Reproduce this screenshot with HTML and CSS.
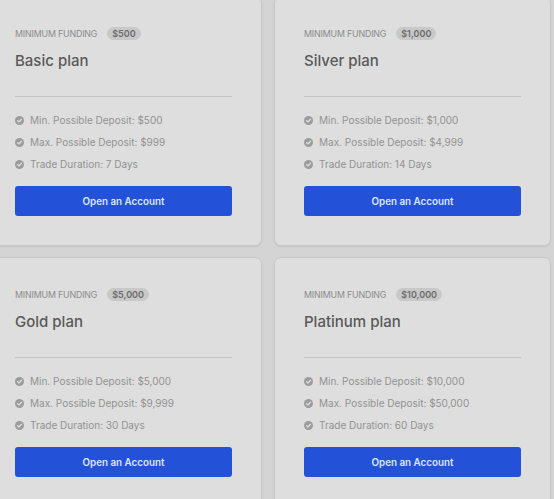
FILE: index.html
```html
<!DOCTYPE html>
<html lang="en">
<head>
<meta charset="utf-8">
<title>Plans</title>
<link rel="stylesheet" href="styles.css">
</head>
<body>
<div class="grid">
  <div class="card">
    <div class="head"><span class="label">MINIMUM FUNDING</span><span class="badge">$500</span></div>
    <h2 class="title">Basic plan</h2>
    <hr class="divider">
    <ul class="list">
      <li><svg class="check" viewBox="0 0 10 10"><circle cx="5" cy="5" r="5"/><path d="M2.8 5.1l1.5 1.5 2.9-3"/></svg>Min. Possible Deposit: $500</li>
      <li><svg class="check" viewBox="0 0 10 10"><circle cx="5" cy="5" r="5"/><path d="M2.8 5.1l1.5 1.5 2.9-3"/></svg>Max. Possible Deposit: $999</li>
      <li><svg class="check" viewBox="0 0 10 10"><circle cx="5" cy="5" r="5"/><path d="M2.8 5.1l1.5 1.5 2.9-3"/></svg>Trade Duration: 7 Days</li>
    </ul>
    <button class="btn">Open an Account</button>
  </div>
  <div class="card">
    <div class="head"><span class="label">MINIMUM FUNDING</span><span class="badge">$1,000</span></div>
    <h2 class="title">Silver plan</h2>
    <hr class="divider">
    <ul class="list">
      <li><svg class="check" viewBox="0 0 10 10"><circle cx="5" cy="5" r="5"/><path d="M2.8 5.1l1.5 1.5 2.9-3"/></svg>Min. Possible Deposit: $1,000</li>
      <li><svg class="check" viewBox="0 0 10 10"><circle cx="5" cy="5" r="5"/><path d="M2.8 5.1l1.5 1.5 2.9-3"/></svg>Max. Possible Deposit: $4,999</li>
      <li><svg class="check" viewBox="0 0 10 10"><circle cx="5" cy="5" r="5"/><path d="M2.8 5.1l1.5 1.5 2.9-3"/></svg>Trade Duration: 14 Days</li>
    </ul>
    <button class="btn">Open an Account</button>
  </div>
  <div class="card">
    <div class="head"><span class="label">MINIMUM FUNDING</span><span class="badge">$5,000</span></div>
    <h2 class="title">Gold plan</h2>
    <hr class="divider">
    <ul class="list">
      <li><svg class="check" viewBox="0 0 10 10"><circle cx="5" cy="5" r="5"/><path d="M2.8 5.1l1.5 1.5 2.9-3"/></svg>Min. Possible Deposit: $5,000</li>
      <li><svg class="check" viewBox="0 0 10 10"><circle cx="5" cy="5" r="5"/><path d="M2.8 5.1l1.5 1.5 2.9-3"/></svg>Max. Possible Deposit: $9,999</li>
      <li><svg class="check" viewBox="0 0 10 10"><circle cx="5" cy="5" r="5"/><path d="M2.8 5.1l1.5 1.5 2.9-3"/></svg>Trade Duration: 30 Days</li>
    </ul>
    <button class="btn">Open an Account</button>
  </div>
  <div class="card">
    <div class="head"><span class="label">MINIMUM FUNDING</span><span class="badge">$10,000</span></div>
    <h2 class="title">Platinum plan</h2>
    <hr class="divider">
    <ul class="list">
      <li><svg class="check" viewBox="0 0 10 10"><circle cx="5" cy="5" r="5"/><path d="M2.8 5.1l1.5 1.5 2.9-3"/></svg>Min. Possible Deposit: $10,000</li>
      <li><svg class="check" viewBox="0 0 10 10"><circle cx="5" cy="5" r="5"/><path d="M2.8 5.1l1.5 1.5 2.9-3"/></svg>Max. Possible Deposit: $50,000</li>
      <li><svg class="check" viewBox="0 0 10 10"><circle cx="5" cy="5" r="5"/><path d="M2.8 5.1l1.5 1.5 2.9-3"/></svg>Trade Duration: 60 Days</li>
    </ul>
    <button class="btn">Open an Account</button>
  </div>
</div>
</body>
</html>
```
FILE: styles.css
```css
html, body {
  margin: 0;
  padding: 0;
  background: #d4d4d4;
  overflow: hidden;
  font-family: Inter, "Liberation Sans", sans-serif;
}
.grid {
  display: grid;
  grid-template-columns: 277px 277px;
  column-gap: 12px;
  row-gap: 11px;
  margin-left: -15px;
  margin-top: -4px;
}
.card {
  box-sizing: border-box;
  height: 250px;
  padding: 29px;
  background: #dedede;
  border: 1px solid #c9c9c9;
  border-radius: 7px;
  box-shadow: 0 1px 2px rgba(0,0,0,0.08);
  display: flex;
  flex-direction: column;
}
.head {
  display: flex;
  align-items: center;
  gap: 10px;
  height: 14px;
}
.label {
  font-size: 8.8px;
  color: #8b8b8b;
  letter-spacing: -0.15px;
}
.badge {
  font-size: 9px;
  font-weight: 600;
  color: #6b6b6b;
  background: #c8c8c8;
  border-radius: 8px;
  padding: 0 5px;
  height: 13px;
  line-height: 13px;
}
.title {
  margin: 10px 0 0;
  font-size: 15px;
  line-height: 22px;
  font-weight: 500;
  color: #595959;
}
.divider {
  margin: 24px 0 0;
  border: 0;
  height: 1px;
  background: #c3c3c3;
}
.list {
  list-style: none;
  margin: 12px 0 0;
  padding: 0;
}
.list li {
  display: flex;
  align-items: center;
  gap: 6px;
  height: 22px;
  font-size: 10px;
  color: #929292;
}
.check {
  width: 9px;
  height: 9px;
  flex: none;
}
.check circle { fill: #9c9c9c; }
.check path {
  fill: none;
  stroke: #e0e0e0;
  stroke-width: 1.4;
  stroke-linecap: round;
  stroke-linejoin: round;
}
.btn {
  margin-top: 11px;
  height: 30px;
  border: 0;
  border-radius: 3px;
  background: #2352d8;
  color: #dde6fb;
  font-family: Inter, "Liberation Sans", sans-serif;
  font-size: 9.8px;
  font-weight: 600;
  cursor: pointer;
}
```
